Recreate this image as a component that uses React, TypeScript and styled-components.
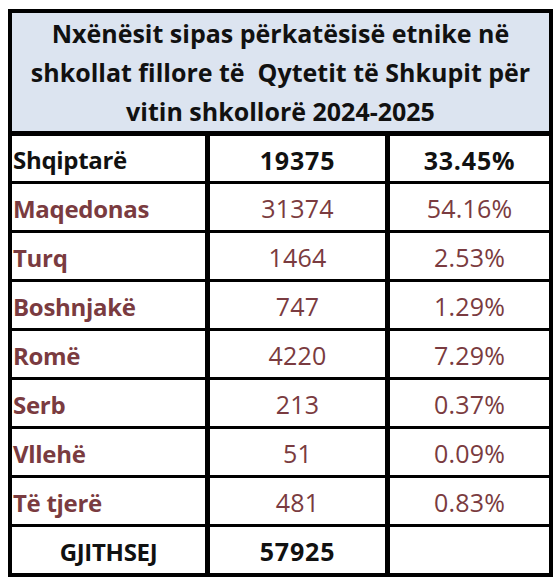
import React, { FC } from 'react'
import styled, { createGlobalStyle } from 'styled-components'

const GlobalStyle = createGlobalStyle`
    body {
        margin: 0;
        background: #ffffff;
        font-family: "Open Sans", "Noto Sans", sans-serif;
    }
`

const Colors = {
    BORDER: '#000000',
    HEADER_BG: '#dce4f0',
    MAROON: '#7a3b40',
    TEXT: '#111111',
}

const StyledSheet = styled.div`
    width: 545px;
    margin: 9px 0 0 8px;
    border: 4px solid ${Colors.BORDER};
    box-sizing: border-box;
    background: #ffffff;
`
const StyledHeader = styled.div`
    height: 123px;
    box-sizing: border-box;
    padding-top: 1px;
    background: ${Colors.HEADER_BG};
    border-bottom: 5px solid ${Colors.BORDER};
    text-align: center;
    font-weight: 700;
    font-size: 25px;
    line-height: 39px;
    color: ${Colors.TEXT};
`
const StyledRow = styled.div<{ $first?: boolean }>`
    display: grid;
    grid-template-columns: 193px 180px 164px;
    height: ${props => props.$first ? '45px' : '49px'};
    box-sizing: border-box;
    border-top: ${props => props.$first ? 'none' : `3px solid ${Colors.BORDER}`};
`
const StyledCell = styled.div<{ $align?: 'left' | 'center'; $bold?: boolean; $tone?: 'dark' | 'maroon'; $divided?: boolean; $numeric?: boolean }>`
    display: flex;
    align-items: center;
    justify-content: ${props => props.$align === 'left' ? 'flex-start' : 'center'};
    padding-left: ${props => props.$align === 'left' ? '1px' : '0'};
    padding-top: 2px;
    box-sizing: border-box;
    border-left: ${props => props.$divided ? `5px solid ${Colors.BORDER}` : 'none'};
    font-size: ${props => props.$numeric ? '25px' : '24px'};
    font-weight: ${props => props.$bold ? 700 : 400};
    letter-spacing: ${props => props.$numeric && props.$bold ? '0.8px' : props.$numeric ? '0.2px' : '-0.3px'};
    color: ${props => props.$tone === 'maroon' ? Colors.MAROON : Colors.TEXT};
    white-space: nowrap;
`

interface IRow {
    name: string
    count: string
    share: string
}

const rows: IRow[] = [
    { name: 'Maqedonas', count: '31374', share: '54.16%' },
    { name: 'Turq', count: '1464', share: '2.53%' },
    { name: 'Boshnjakë', count: '747', share: '1.29%' },
    { name: 'Romë', count: '4220', share: '7.29%' },
    { name: 'Serb', count: '213', share: '0.37%' },
    { name: 'Vllehë', count: '51', share: '0.09%' },
    { name: 'Të tjerë', count: '481', share: '0.83%' },
]

const App: FC = () => {
    return (
        <>
            <GlobalStyle />
            <StyledSheet>
                <StyledHeader>
                    Nxënësit sipas përkatësisë etnike në<br />
                    shkollat fillore të&nbsp; Qytetit të Shkupit për<br />
                    vitin shkollorë 2024-2025
                </StyledHeader>
                <StyledRow $first>
                    <StyledCell $align='left' $bold>Shqiptarë</StyledCell>
                    <StyledCell $bold $numeric $divided>19375</StyledCell>
                    <StyledCell $bold $numeric $divided>33.45%</StyledCell>
                </StyledRow>
                {rows.map(row => (
                    <StyledRow key={row.name}>
                        <StyledCell $align='left' $bold $tone='maroon'>{row.name}</StyledCell>
                        <StyledCell $tone='maroon' $numeric $divided>{row.count}</StyledCell>
                        <StyledCell $tone='maroon' $numeric $divided>{row.share}</StyledCell>
                    </StyledRow>
                ))}
                <StyledRow>
                    <StyledCell $bold>GJITHSEJ</StyledCell>
                    <StyledCell $bold $numeric $divided>57925</StyledCell>
                    <StyledCell $divided></StyledCell>
                </StyledRow>
            </StyledSheet>
        </>
    )
}

export default App
